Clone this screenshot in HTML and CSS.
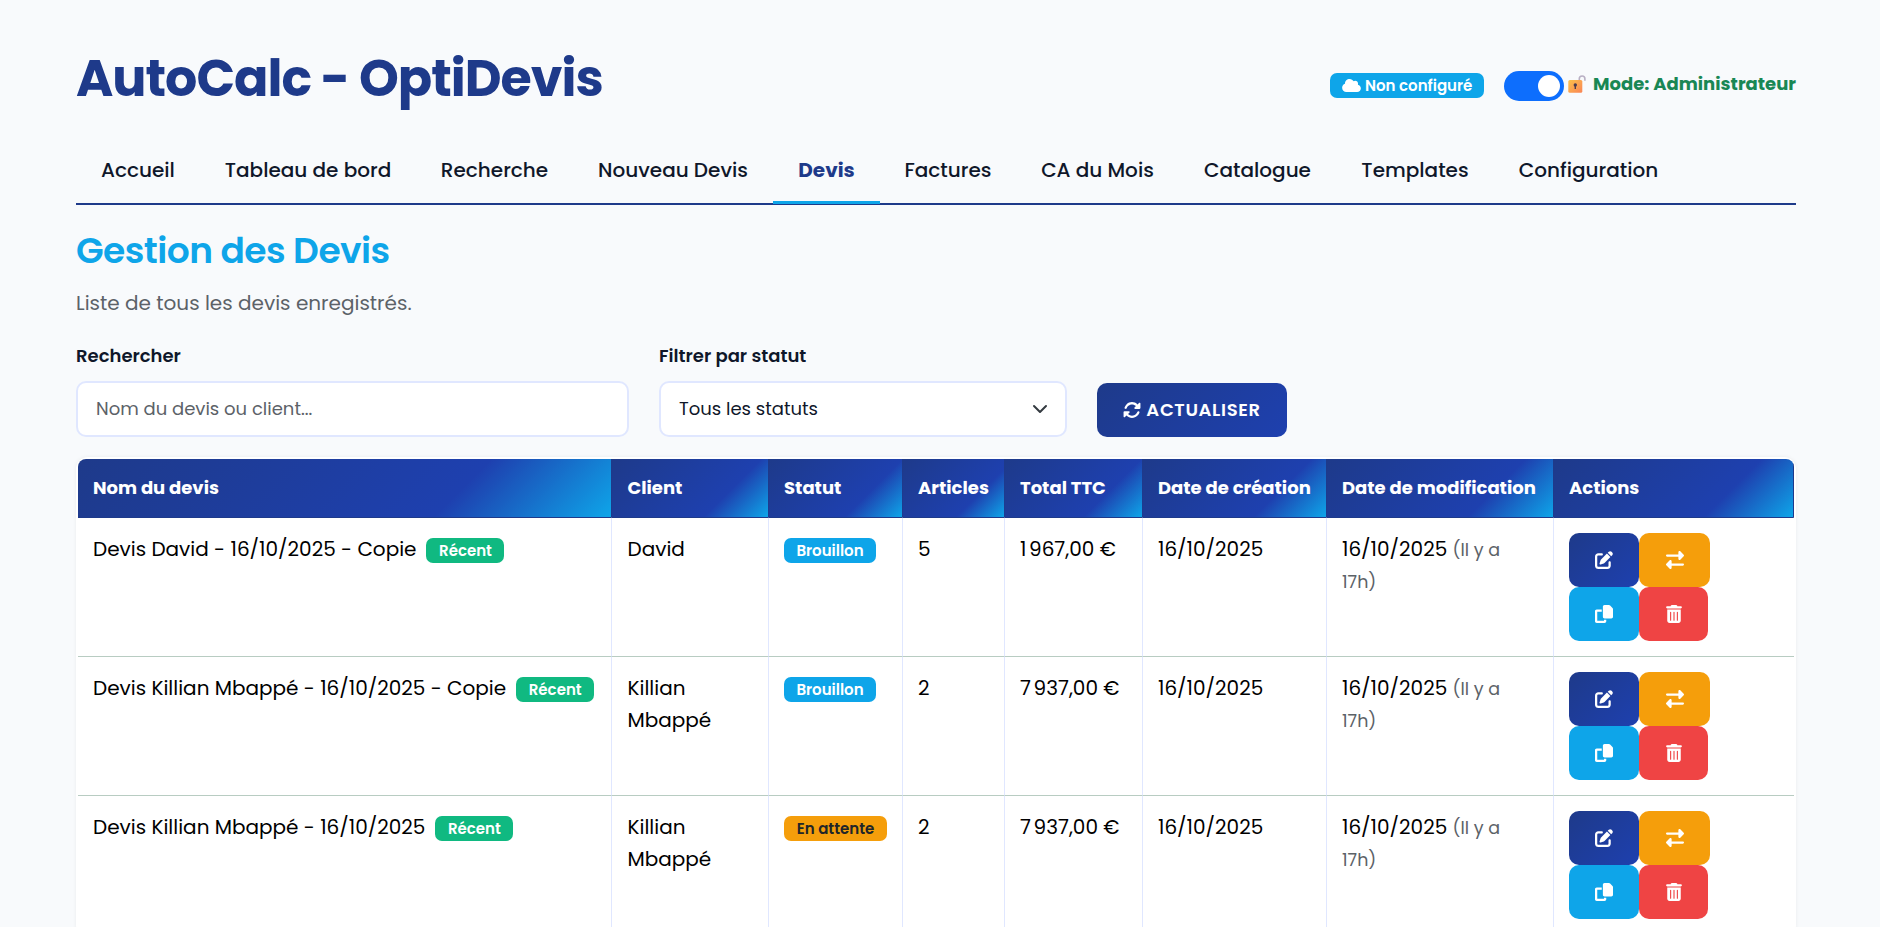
FILE: index.html
```html
<!DOCTYPE html>
<html lang="fr">
<head>
<meta charset="utf-8">
<title>AutoCalc - OptiDevis</title>
<link rel="stylesheet" href="styles.css">
</head>
<body>
<svg class="sprite" aria-hidden="true">
  <symbol id="i-cloud" viewBox="0 0 640 512"><path d="M0 336c0 79.5 64.5 144 144 144H512c70.7 0 128-57.3 128-128c0-61.9-44-113.6-102.4-125.4c4.1-10.7 6.4-22.4 6.4-34.6c0-53-43-96-96-96c-19.7 0-38.1 6-53.3 16.2C367 64.2 315.3 32 256 32C167.6 32 96 103.6 96 192c0 2.7 .1 5.4 .2 8.1C40.2 219.8 0 273.2 0 336z"/></symbol>
  <symbol id="i-sync" viewBox="0 0 512 512"><path d="M142.9 142.9c62.2-62.2 162.7-62.5 225.3-1L327 183c-6.9 6.9-8.9 17.2-5.2 26.2s12.5 14.8 22.2 14.8H472c13.3 0 24-10.7 24-24V72c0-9.7-5.8-18.5-14.8-22.2s-19.3-1.7-26.2 5.2L413.4 96.6c-87.6-86.5-228.7-86.2-315.8 1C73.2 122 55.6 150.7 44.8 181.4c-5.9 16.7 2.9 34.9 19.5 40.8s34.9-2.9 40.8-19.5c7.7-21.8 20.2-42.3 37.8-59.8zM16 312V440c0 9.7 5.8 18.5 14.8 22.2s19.3 1.7 26.2-5.2l41.6-41.6c87.6 86.5 228.7 86.2 315.8-1c24.4-24.4 42.1-53.1 52.9-83.7c5.9-16.7-2.9-34.9-19.5-40.8s-34.9 2.9-40.8 19.5c-7.7 21.8-20.2 42.3-37.8 59.8c-62.2 62.2-162.7 62.5-225.3 1L185 329c6.9-6.9 8.9-17.2 5.2-26.2s-12.5-14.8-22.2-14.8H40c-13.3 0-24 10.7-24 24z"/></symbol>
  <symbol id="i-edit" viewBox="0 0 512 512"><path d="M471.6 21.7c-21.9-21.9-57.3-21.9-79.2 0L362.3 51.7l97.9 97.9 30.1-30.1c21.9-21.9 21.9-57.3 0-79.2L471.6 21.7zm-299.2 220c-6.1 6.1-10.8 13.6-13.5 21.9l-29.6 88.8c-2.9 8.6-.6 18.1 5.8 24.6s15.9 8.7 24.6 5.8l88.8-29.6c8.2-2.7 15.7-7.4 21.9-13.5L437.7 172.3 339.7 74.3 172.4 241.7zM96 64C43 64 0 107 0 160V416c0 53 43 96 96 96H352c53 0 96-43 96-96V320c0-17.7-14.3-32-32-32s-32 14.3-32 32v96c0 17.7-14.3 32-32 32H96c-17.7 0-32-14.3-32-32V160c0-17.7 14.3-32 32-32h96c17.7 0 32-14.3 32-32s-14.3-32-32-32H96z"/></symbol>
  <symbol id="i-swap" viewBox="0 0 512 512"><path d="M32 96l320 0V32c0-12.9 7.8-24.6 19.8-29.6s25.7-2.2 34.9 6.9l96 96c6 6 9.4 14.1 9.4 22.6s-3.4 16.6-9.4 22.6l-96 96c-9.2 9.2-22.9 11.9-34.9 6.9s-19.8-16.6-19.8-29.6V160L32 160c-17.7 0-32-14.3-32-32s14.3-32 32-32zM480 352c17.7 0 32 14.3 32 32s-14.3 32-32 32H160v64c0 12.9-7.8 24.6-19.8 29.6s-25.7 2.2-34.9-6.9l-96-96c-6-6-9.4-14.1-9.4-22.6s3.4-16.6 9.4-22.6l96-96c9.2-9.2 22.9-11.9 34.9-6.9s19.8 16.6 19.8 29.6l0 64H480z"/></symbol>
  <symbol id="i-copy" viewBox="0 0 512 512"><path d="M272 0H396.1c12.7 0 24.9 5.1 33.9 14.1l67.9 67.9c9 9 14.1 21.2 14.1 33.9V336c0 26.5-21.5 48-48 48H272c-26.5 0-48-21.5-48-48V48c0-26.5 21.5-48 48-48zM48 128H192v64H64V448H256V416h64v48c0 26.5-21.5 48-48 48H48c-26.5 0-48-21.5-48-48V176c0-26.5 21.5-48 48-48z"/></symbol>
  <symbol id="i-trash" viewBox="0 0 448 512"><path d="M135.2 17.7C140.6 6.8 151.7 0 163.8 0H284.2c12.1 0 23.2 6.8 28.6 17.7L320 32h96c17.7 0 32 14.3 32 32s-14.3 32-32 32H32C14.3 96 0 81.7 0 64S14.3 32 32 32h96l7.2-14.3zM32 128H416V448c0 35.3-28.7 64-64 64H96c-35.3 0-64-28.7-64-64V128zm96 64c-8.800 0-16 7.200-16 16V432c0 8.800 7.200 16 16 16s16-7.200 16-16V208c0-8.800-7.200-16-16-16zm96 0c-8.800 0-16 7.200-16 16V432c0 8.800 7.200 16 16 16s16-7.200 16-16V208c0-8.800-7.200-16-16-16zm96 0c-8.800 0-16 7.200-16 16V432c0 8.800 7.200 16 16 16s16-7.200 16-16V208c0-8.800-7.200-16-16-16z"/></symbol>
</svg>

<div class="container">
  <header class="top">
    <h1 class="brand">AutoCalc - OptiDevis</h1>
    <div class="status">
      <span class="badge cloud"><svg class="ico-cloud"><use href="#i-cloud"/></svg>Non configuré</span>
      <span class="switch"><span class="knob"></span></span>
      <svg class="lock" viewBox="0 0 18 18">
        <defs><linearGradient id="lockFill" x1="0" y1="0" x2="1" y2="1"><stop offset="0" stop-color="#fcc24a"/><stop offset="1" stop-color="#fa8455"/></linearGradient></defs>
        <path d="M11.300 5.500V3.800a2.800 2.800 0 0 1 5.600 0V5.800" fill="none" stroke="#b9b0c4" stroke-width="1.600"/>
        <rect x="0.300" y="5" width="14" height="12.700" rx="1.500" fill="url(#lockFill)"/>
        <circle cx="7.300" cy="10" r="1.700" fill="#4b3b4f"/><path d="M6.600 10h1.400v4h-1.400z" fill="#4b3b4f"/>
      </svg>
      <span class="mode">Mode: Administrateur</span>
    </div>
  </header>

  <nav class="tabs">
    <a class="tab">Accueil</a><a class="tab">Tableau de bord</a><a class="tab">Recherche</a><a class="tab">Nouveau Devis</a><a class="tab active">Devis</a><a class="tab">Factures</a><a class="tab">CA du Mois</a><a class="tab">Catalogue</a><a class="tab">Templates</a><a class="tab">Configuration</a>
  </nav>

  <main>
    <h2 class="title">Gestion des Devis</h2>
    <p class="lead">Liste de tous les devis enregistrés.</p>

    <form class="filters">
      <div class="field">
        <label class="label">Rechercher</label>
        <div class="control placeholder">Nom du devis ou client...</div>
      </div>
      <div class="field">
        <label class="label">Filtrer par statut</label>
        <div class="control select">Tous les statuts<svg class="chevron" viewBox="0 0 16 16"><path d="m2 5 6 6 6-6" fill="none" stroke="#343a40" stroke-width="2" stroke-linecap="round" stroke-linejoin="round"/></svg></div>
      </div>
      <button type="button" class="refresh"><svg class="ico"><use href="#i-sync"/></svg>ACTUALISER</button>
    </form>

    <div class="table-card">
      <table class="quotes">
        <colgroup><col class="c-name"><col class="c-client"><col class="c-status"><col class="c-items"><col class="c-total"><col class="c-created"><col class="c-edited"><col class="c-actions"></colgroup>
        <thead>
          <tr><th>Nom du devis</th><th class="client">Client</th><th>Statut</th><th>Articles</th><th>Total TTC</th><th>Date de création</th><th>Date de modification</th><th>Actions</th></tr>
        </thead>
        <tbody>
          <tr>
            <td>Devis David - 16/10/2025 - Copie<span class="badge recent">Récent</span></td>
            <td class="client">David</td>
            <td><span class="badge draft">Brouillon</span></td>
            <td>5</td>
            <td class="num">1&#8239;967,00&nbsp;€</td>
            <td class="num">16/10/2025</td>
            <td class="num">16/10/2025 <small class="ago">(Il y a 17h)</small></td>
            <td><div class="actions"><span class="btn edit"><svg class="ico"><use href="#i-edit"/></svg></span><span class="btn swap"><svg class="ico"><use href="#i-swap"/></svg></span><span class="btn copy"><svg class="ico"><use href="#i-copy"/></svg></span><span class="btn trash"><svg class="ico"><use href="#i-trash"/></svg></span></div></td>
          </tr>
          <tr>
            <td>Devis Killian Mbappé - 16/10/2025 - Copie<span class="badge recent">Récent</span></td>
            <td class="client">Killian Mbappé</td>
            <td><span class="badge draft">Brouillon</span></td>
            <td>2</td>
            <td class="num">7&#8239;937,00&nbsp;€</td>
            <td class="num">16/10/2025</td>
            <td class="num">16/10/2025 <small class="ago">(Il y a 17h)</small></td>
            <td><div class="actions"><span class="btn edit"><svg class="ico"><use href="#i-edit"/></svg></span><span class="btn swap"><svg class="ico"><use href="#i-swap"/></svg></span><span class="btn copy"><svg class="ico"><use href="#i-copy"/></svg></span><span class="btn trash"><svg class="ico"><use href="#i-trash"/></svg></span></div></td>
          </tr>
          <tr>
            <td>Devis Killian Mbappé - 16/10/2025<span class="badge recent">Récent</span></td>
            <td class="client">Killian Mbappé</td>
            <td><span class="badge pending">En attente</span></td>
            <td>2</td>
            <td class="num">7&#8239;937,00&nbsp;€</td>
            <td class="num">16/10/2025</td>
            <td class="num">16/10/2025 <small class="ago">(Il y a 17h)</small></td>
            <td><div class="actions"><span class="btn edit"><svg class="ico"><use href="#i-edit"/></svg></span><span class="btn swap"><svg class="ico"><use href="#i-swap"/></svg></span><span class="btn copy"><svg class="ico"><use href="#i-copy"/></svg></span><span class="btn trash"><svg class="ico"><use href="#i-trash"/></svg></span></div></td>
          </tr>
        </tbody>
      </table>
    </div>
  </main>
</div>
</body>
</html>
```
FILE: styles.css
```css
* { box-sizing: border-box; }
html { overflow: hidden; }
body {
  margin: 0;
  height: 927px;
  overflow: hidden;
  background: #f8fafc;
  color: #0f172a;
  font-family: Poppins, Inter, sans-serif;
  font-size: 20px;
}
.sprite { display: none; }
.container { width: 1720px; margin-left: 76px; }

.top {
  display: flex;
  justify-content: space-between;
  align-items: center;
  height: 144px;
  padding-top: 12px;
}
.brand {
  margin: 0;
  padding-top: 2px;
  color: #1e3a8a;
  font-size: 50.7px;
  font-weight: 700;
  line-height: 60px;
  letter-spacing: -1px;
}
.status { display: flex; align-items: center; padding-top: 14px; }
.badge {
  display: inline-block;
  height: 25px;
  border-radius: 7px;
  color: #fff;
  font-size: 15px;
  font-weight: 600;
  line-height: 25px;
  text-align: center;
  white-space: nowrap;
}
.cloud {
  display: flex;
  align-items: center;
  gap: 4px;
  width: 154px;
  padding: 0 12px;
  margin-right: 20px;
  background: #0ea5e9;
}
.ico-cloud { width: 19px; height: 15px; fill: currentColor; flex: none; }
.switch {
  display: flex;
  justify-content: flex-end;
  align-items: center;
  width: 60px;
  height: 30px;
  margin-top: 2px;
  padding-right: 4px;
  border-radius: 15px;
  background: #0d6efd;
}
.knob { width: 22px; height: 22px; border-radius: 50%; background: #fff; }
.lock { width: 18px; height: 18px; margin: 0 7px 2px 4px; }
.mode {
  width: 203px;
  padding-bottom: 3px;
  color: #198754;
  font-size: 18px;
  font-weight: 700;
  white-space: nowrap;
}

.tabs {
  display: grid;
  grid-template-columns: 124px 216px 157px 200px 107px 136px 163px 157px 158px 189px;
  height: 61px;
  border-bottom: 2px solid #1e3a8a;
}
.tab {
  height: 60px;
  padding-top: 10px;
  border-bottom: 3px solid transparent;
  font-weight: 500;
  line-height: 32px;
  text-align: center;
  white-space: nowrap;
}
.tab.active { border-color: #0ea5e9; color: #1e3a8a; font-weight: 700; }

.title {
  margin: 24px 0 0;
  color: #0ea5e9;
  font-size: 36px;
  font-weight: 600;
  line-height: 44px;
  letter-spacing: -.54px;
}
.lead { margin: 14px 0 0; color: #5c6268; line-height: 32px; }

.filters {
  display: grid;
  grid-template-columns: 553px 408px 190px;
  gap: 30px;
  align-items: end;
  margin-top: 23px;
}
.label {
  display: block;
  margin-bottom: 11px;
  font-size: 18px;
  font-weight: 600;
  line-height: 28px;
}
.control {
  display: flex;
  align-items: center;
  justify-content: space-between;
  height: 56px;
  padding: 0 17px 1px 18px;
  border: 2px solid #e0e7ff;
  border-radius: 10px;
  background: #fff;
  font-size: 18px;
}
.placeholder { color: #5c6268; }
.chevron { width: 16px; height: 16px; }
.refresh {
  display: flex;
  align-items: center;
  justify-content: center;
  gap: 5px;
  height: 54px;
  padding: 0 0 1px;
  border: 0;
  border-radius: 10px;
  background: linear-gradient(135deg, #1e3a8a, #1e40af);
  color: #fff;
  font: inherit;
  font-size: 18px;
  font-weight: 600;
  letter-spacing: .64px;
}
.ico { width: 18px; height: 18px; fill: currentColor; }

.table-card {
  margin-top: 20px;
  padding: 2px;
  border-radius: 12px;
  background: #fff;
  box-shadow: 0 0 4px rgba(15, 23, 42, .06);
}
.quotes {
  width: 1716px;
  table-layout: fixed;
  border-collapse: separate;
  border-spacing: 0;
  border-radius: 8px;
  overflow: hidden;
  color: #000;
}
.c-name { width: 534px; }
.c-client { width: 157px; }
.c-status { width: 134px; }
.c-items { width: 102px; }
.c-total { width: 138px; }
.c-created { width: 184px; }
.c-edited { width: 227px; }
.c-actions { width: 240px; }
.quotes th {
  height: 59px;
  padding: 0 0 2px 15px;
  border-right: 1px solid rgba(30, 58, 138, .6);
  border-bottom: 1px solid #1e3a8a;
  background: linear-gradient(135deg, #1e3a8a 0%, #1e40af 70%, #0ea5e9 100%);
  color: #fff;
  font-size: 18px;
  font-weight: 700;
  text-align: left;
  white-space: nowrap;
}
.quotes th.client { padding-left: 15.5px; }
.quotes td {
  height: 139px;
  padding: 15px 0 0 15px;
  border-right: 1px solid #e0e7ff;
  border-bottom: 1px solid #b8ccc2;
  line-height: 32px;
  vertical-align: top;
}
.quotes td:last-child { border-right: 0; }
.quotes td.client { padding-right: 40px; padding-left: 15.5px; }
.quotes td.num { padding-right: 15px; }
.recent { width: 78px; margin-left: 10px; background: #10b981; }
.draft { width: 92px; background: #0ea5e9; }
.pending { width: 103px; background: #f59e0b; color: #212529; }
.ago { color: #5c6268; font-size: 17.5px; line-height: 30px; }
.actions { display: flex; flex-wrap: wrap; width: 150px; }
.btn {
  display: flex;
  align-items: center;
  justify-content: center;
  width: 70px;
  height: 54px;
  border-radius: 10px;
  color: #fff;
}
.edit { background: linear-gradient(135deg, #1e3a8a, #1e40af); }
.swap { width: 71px; background: #f59e0b; }
.copy { background: #0ea5e9; }
.trash { width: 69px; background: #ef4444; }
```
